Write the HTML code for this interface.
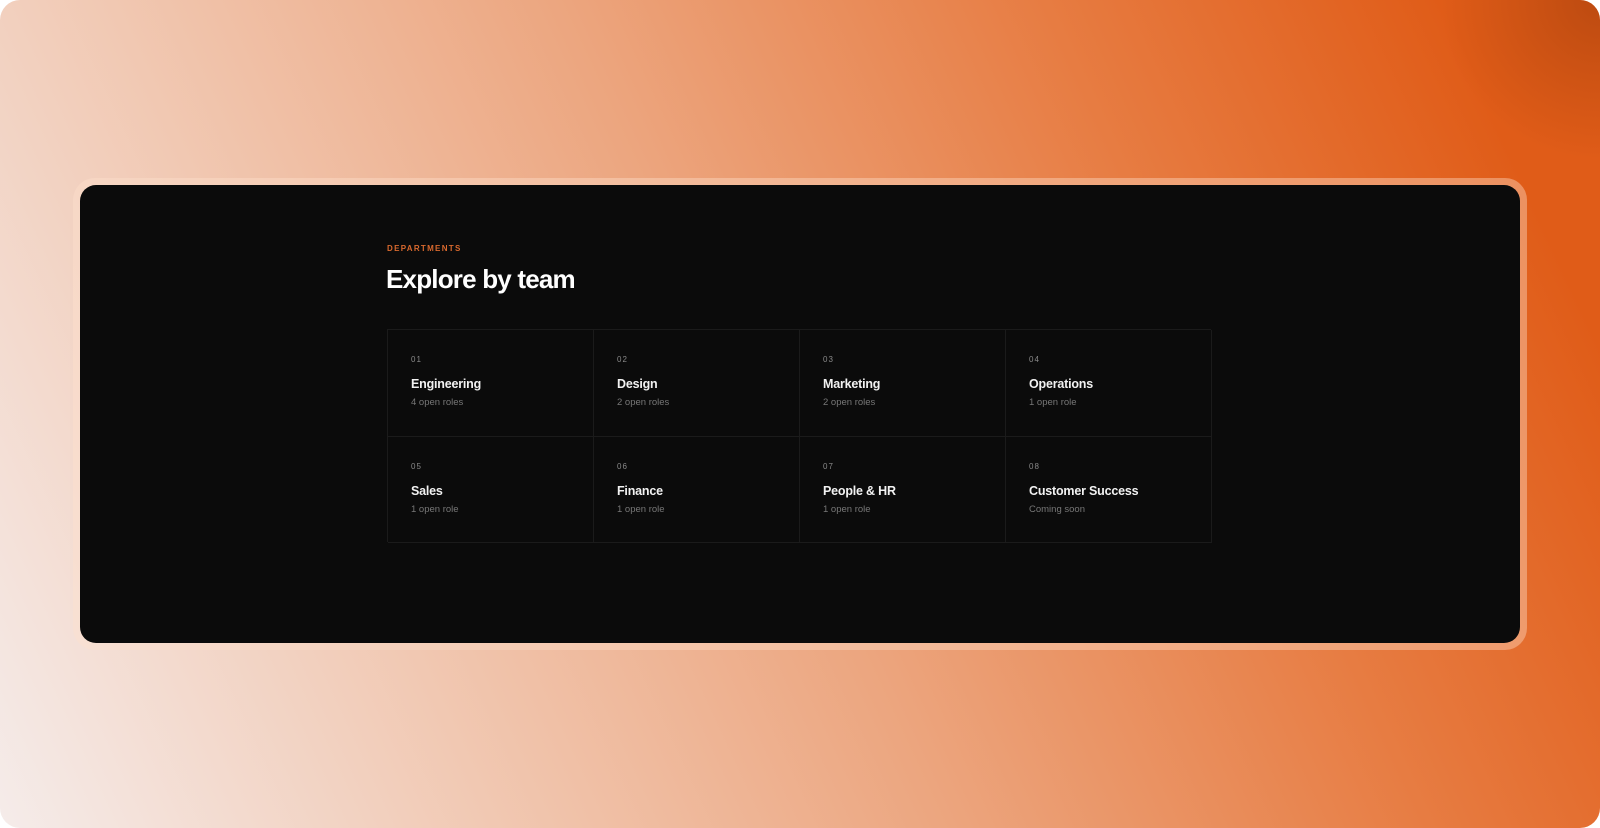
<!DOCTYPE html>
<html><head><style>
*{margin:0;padding:0;box-sizing:border-box}
body{width:1600px;height:828px;background:#fff;font-family:"Liberation Sans",sans-serif;overflow:hidden;position:relative}
.bg{position:absolute;left:0;top:0;width:1600px;height:828px;border-radius:20px;
background:linear-gradient(65deg,#f5ecea 0%,#f1c8b2 25%,#eca57e 48%,#e77c42 72%,#e05c18 92%);overflow:hidden}
.bg:after{content:"";position:absolute;inset:0;background:radial-gradient(circle at 100% 0%,rgba(160,60,10,.55) 0,rgba(200,80,20,0) 160px)}
.frame{position:absolute;left:73px;top:178px;width:1454px;height:472px;border-radius:22px;background:rgba(255,225,205,.4)}
.card{position:absolute;left:80px;top:185px;width:1440px;height:458px;border-radius:16px;background:#0b0b0b}
.eyebrow{position:absolute;left:387px;top:244px;font-size:8px;font-weight:bold;letter-spacing:1.3px;color:#d9692e}
h1{position:absolute;left:386px;top:264px;font-size:26px;font-weight:bold;color:#fff;letter-spacing:-0.8px}
.grid{position:absolute;left:387px;top:329px;width:824px;height:213px;display:grid;grid-template-columns:repeat(4,206px);grid-template-rows:repeat(2,106.5px);border-left:1px solid #1b1b1b;border-top:1px solid #1b1b1b}
.c{border-right:1px solid #1b1b1b;border-bottom:1px solid #1b1b1b;padding:25px 0 0 23px;position:relative}
.n{font-size:8px;color:#8a8a8a;letter-spacing:1px}
.t{margin-top:13px;font-size:12.5px;font-weight:bold;color:#f2f2f2;letter-spacing:-0.2px}
.s{margin-top:6px;font-size:9.5px;color:#777}
</style></head><body>
<div class="bg"></div>
<div class="frame"></div>
<div class="card"></div>
<div class="eyebrow">DEPARTMENTS</div>
<h1>Explore by team</h1>
<div class="grid">
<div class="c"><div class="n">01</div><div class="t">Engineering</div><div class="s">4 open roles</div></div>
<div class="c"><div class="n">02</div><div class="t">Design</div><div class="s">2 open roles</div></div>
<div class="c"><div class="n">03</div><div class="t">Marketing</div><div class="s">2 open roles</div></div>
<div class="c"><div class="n">04</div><div class="t">Operations</div><div class="s">1 open role</div></div>
<div class="c"><div class="n">05</div><div class="t">Sales</div><div class="s">1 open role</div></div>
<div class="c"><div class="n">06</div><div class="t">Finance</div><div class="s">1 open role</div></div>
<div class="c"><div class="n">07</div><div class="t">People &amp; HR</div><div class="s">1 open role</div></div>
<div class="c"><div class="n">08</div><div class="t">Customer Success</div><div class="s">Coming soon</div></div>
</div>
</body></html>
